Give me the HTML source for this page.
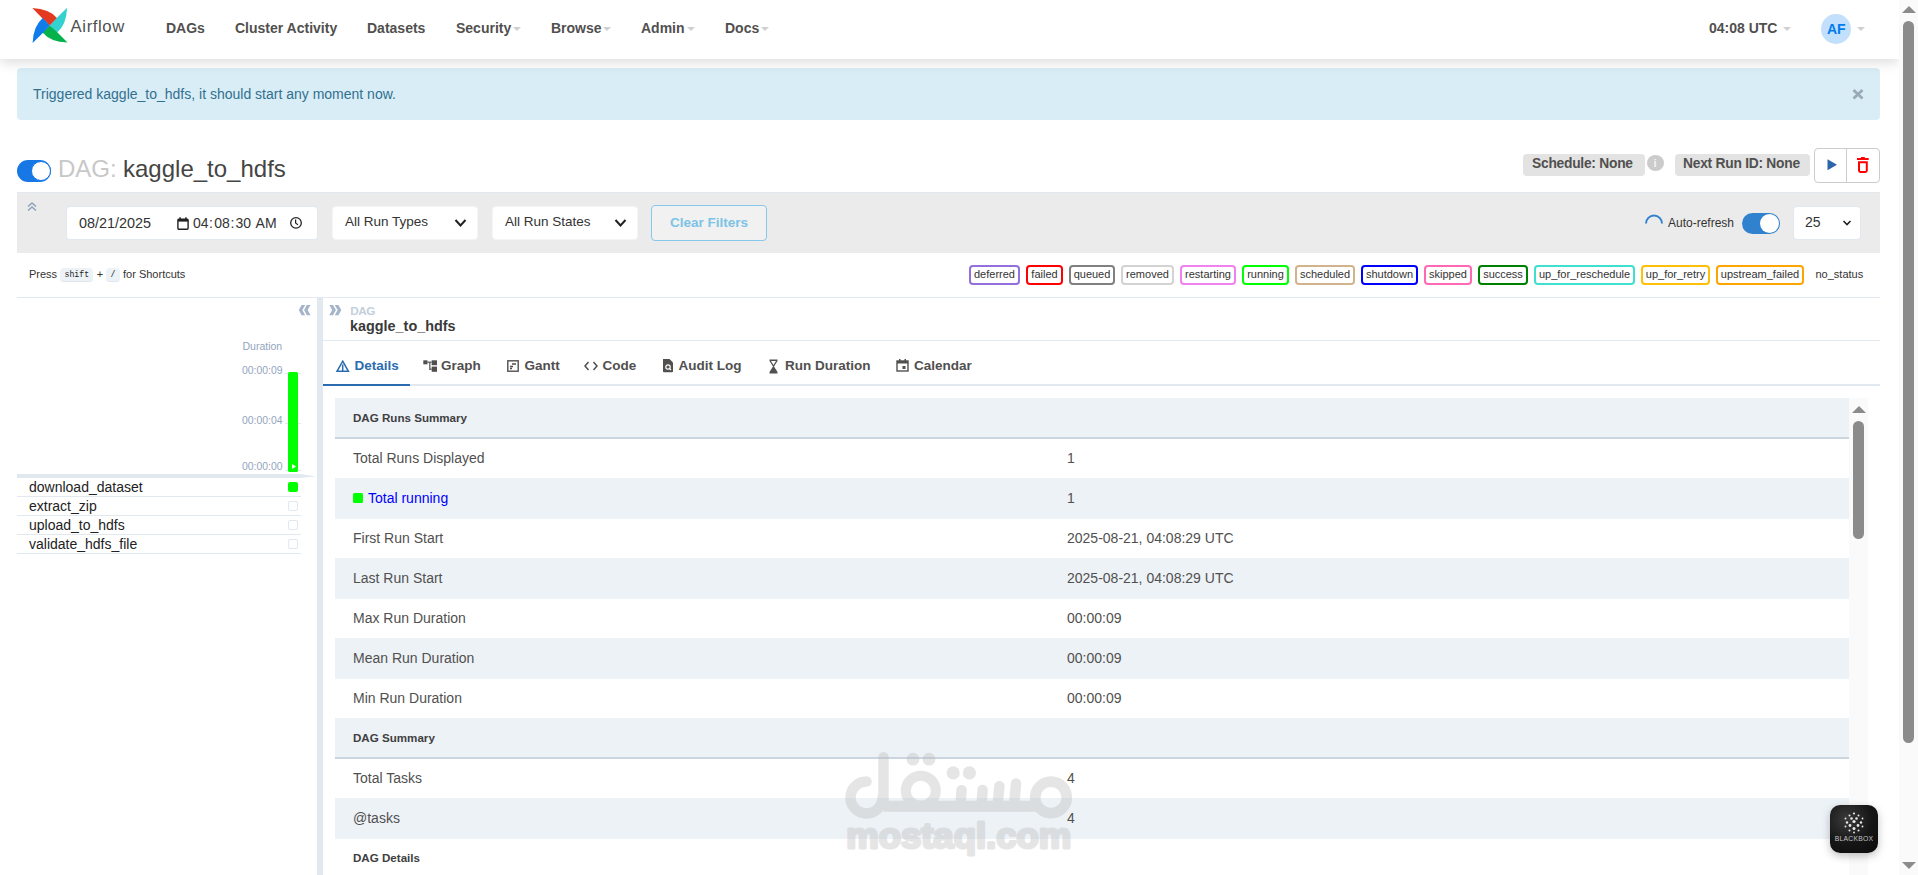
<!DOCTYPE html>
<html><head><meta charset="utf-8"><title>Airflow</title>
<style>
html,body{margin:0;padding:0;width:1918px;height:875px;overflow:hidden;background:#fff;}
body{position:relative;font-family:"Liberation Sans", sans-serif;}
.t{position:absolute;white-space:nowrap;}
.r{position:absolute;box-sizing:border-box;}
svg{position:absolute;overflow:visible;}
</style></head><body>
<div class="r" style="left:0px;top:0px;width:1899px;height:59px;background:#fff;box-shadow:0 3px 12px rgba(0,0,0,0.15);z-index:1"></div>
<svg style="left:30px;top:6px;z-index:2" width="40" height="40" viewBox="0 0 40 40">
<path d="M2.3 2.1 L12.3 12.3 L19.9 19.4 L27.2 12.3 Q19.4 2.8 2.3 2.1 Z" fill="#e43921"/>
<path d="M37.1 1.8 L26.9 11.8 L19.9 19.4 L26.9 26.7 Q36.5 18.9 37.1 1.8 Z" fill="#33d1d0"/>
<path d="M37.5 36.6 L27.5 26.4 L19.9 19.4 L12.6 26.4 Q20.4 35.9 37.5 36.6 Z" fill="#04b14b"/>
<path d="M2.6 37.0 L12.8 26.9 L19.9 19.4 L12.8 12.1 Q3.3 19.9 2.6 37.0 Z" fill="#0f7ce9"/>
</svg>
<div class="t " style="left:70.60px;top:18.66px;font-size:16.7px;line-height:16.7px;color:#51504f;font-weight:normal;z-index:2;letter-spacing:0.6px">Airflow</div>
<div class="t " style="left:166.00px;top:21.15px;font-size:14px;line-height:14px;color:#51504f;font-weight:bold;z-index:2">DAGs</div>
<div class="t " style="left:235.00px;top:21.15px;font-size:14px;line-height:14px;color:#51504f;font-weight:bold;z-index:2">Cluster Activity</div>
<div class="t " style="left:367.00px;top:21.15px;font-size:14px;line-height:14px;color:#51504f;font-weight:bold;z-index:2">Datasets</div>
<div class="t " style="left:456.00px;top:21.15px;font-size:14px;line-height:14px;color:#51504f;font-weight:bold;z-index:2">Security</div>
<div class="t " style="left:551.00px;top:21.15px;font-size:14px;line-height:14px;color:#51504f;font-weight:bold;z-index:2">Browse</div>
<div class="t " style="left:641.00px;top:21.15px;font-size:14px;line-height:14px;color:#51504f;font-weight:bold;z-index:2">Admin</div>
<div class="t " style="left:725.00px;top:21.15px;font-size:14px;line-height:14px;color:#51504f;font-weight:bold;z-index:2">Docs</div>
<div class="r" style="left:513px;top:26.5px;width:0;height:0;border-left:4.0px solid transparent;border-right:4.0px solid transparent;border-top:4px solid #cfcfcf;z-index:2"></div>
<div class="r" style="left:603px;top:26.5px;width:0;height:0;border-left:4.0px solid transparent;border-right:4.0px solid transparent;border-top:4px solid #cfcfcf;z-index:2"></div>
<div class="r" style="left:687px;top:26.5px;width:0;height:0;border-left:4.0px solid transparent;border-right:4.0px solid transparent;border-top:4px solid #cfcfcf;z-index:2"></div>
<div class="r" style="left:761px;top:26.5px;width:0;height:0;border-left:4.0px solid transparent;border-right:4.0px solid transparent;border-top:4px solid #cfcfcf;z-index:2"></div>
<div class="t " style="left:1709.00px;top:20.95px;font-size:14px;line-height:14px;color:#51504f;font-weight:bold;z-index:2">04:08 UTC</div>
<div class="r" style="left:1783px;top:27px;width:0;height:0;border-left:4.0px solid transparent;border-right:4.0px solid transparent;border-top:4px solid #cfcfcf;z-index:2"></div>
<div class="r" style="left:1821px;top:14px;width:30px;height:30px;background:#c2e0fb;border-radius:50%;z-index:2"></div>
<div class="t " style="left:1827.00px;top:22.05px;font-size:14px;line-height:14px;color:#017cee;font-weight:bold;z-index:2">AF</div>
<div class="r" style="left:1857px;top:27px;width:0;height:0;border-left:4.0px solid transparent;border-right:4.0px solid transparent;border-top:4px solid #cfcfcf;z-index:2"></div>
<div class="r" style="left:17px;top:68px;width:1863px;height:52px;background:#d9edf7;border-radius:4px"></div>
<div class="t " style="left:33.00px;top:87.05px;font-size:14px;line-height:14px;color:#31708f;font-weight:normal;">Triggered kaggle_to_hdfs, it should start any moment now.</div>
<svg style="left:1850px;top:86px" width="16" height="16" viewBox="0 0 16 16"><path d="M3.5 4 L12.5 12.5 M12.5 4 L3.5 12.5" stroke="#9aa9b8" stroke-width="2.8"/></svg>
<div class="r" style="left:17px;top:160px;width:34px;height:22px;background:#1677e5;border-radius:11px"></div>
<div class="r" style="left:30.5px;top:161px;width:20.0px;height:20px;background:#fff;border-radius:50%;border:1.5px solid #1677e5"></div>
<div class="t " style="left:58.00px;top:157.28px;font-size:24px;line-height:24px;color:#c8c8c8;font-weight:normal;">DAG:</div>
<div class="t " style="left:123.00px;top:157.28px;font-size:24px;line-height:24px;color:#454545;font-weight:normal;">kaggle_to_hdfs</div>
<div class="r" style="left:1523px;top:154px;width:122px;height:22px;background:#e3e3e3;border-radius:4px"></div>
<div class="t " style="left:1532.00px;top:157.22px;font-size:13.8px;line-height:13.8px;color:#51504f;font-weight:bold;letter-spacing:-0.25px">Schedule: None</div>
<div class="r" style="left:1647px;top:155px;width:17px;height:16px;background:#cbcbcb;border-radius:50%"></div>
<div class="t " style="left:1653.50px;top:158.19px;font-size:11px;line-height:11px;color:#f2f2f2;font-weight:bold;">i</div>
<div class="r" style="left:1675px;top:154px;width:135px;height:22px;background:#e3e3e3;border-radius:4px"></div>
<div class="t " style="left:1683.00px;top:157.22px;font-size:13.8px;line-height:13.8px;color:#51504f;font-weight:bold;letter-spacing:-0.25px">Next Run ID: None</div>
<div class="r" style="left:1814px;top:148px;width:66px;height:35px;border:1px solid #ccc;border-radius:4px;background:#fff"></div>
<div class="r" style="left:1846px;top:148px;width:1px;height:35px;background:#ccc"></div>
<svg style="left:1827px;top:159px" width="11" height="12" viewBox="0 0 11 12"><path d="M0.5 0.3 L10 5.8 L0.5 11.3 Z" fill="#2d65ad"/></svg>
<svg style="left:1856px;top:156px" width="14" height="18" viewBox="0 0 14 18"><rect x="1" y="2" width="11.7" height="2" fill="#f00"/><rect x="5" y="1" width="3.8" height="2" fill="#f00"/><path d="M3 6.2 H10.8 V14.6 Q10.8 15.9 9.5 15.9 H4.3 Q3 15.9 3 14.6 Z" fill="none" stroke="#f00" stroke-width="2"/></svg>
<div class="r" style="left:17px;top:192px;width:1863px;height:61px;background:#ebebeb;border-top:1px solid #e3e8ee"></div>
<svg style="left:27px;top:202px" width="10" height="10" viewBox="0 0 10 10"><path d="M1 4.5 L5 1 L9 4.5 M1 8.5 L5 5 L9 8.5" fill="none" stroke="#8ea3bf" stroke-width="1.6"/></svg>
<div class="r" style="left:66px;top:206px;width:252px;height:34px;background:#fff;border:1px solid #e2e8f0;border-radius:4px"></div>
<div class="t " style="left:79.00px;top:215.81px;font-size:14.4px;line-height:14.4px;color:#333;font-weight:normal;">08/21/2025</div>
<svg style="left:177px;top:217px" width="12" height="13" viewBox="0 0 12 13"><rect x="0.9" y="2.2" width="10.2" height="10" rx="1" fill="none" stroke="#222" stroke-width="1.4"/><rect x="0.9" y="2.2" width="10.2" height="2.4" fill="#222"/><rect x="2.3" y="0.3" width="1.5" height="2.5" fill="#222"/><rect x="8.2" y="0.3" width="1.5" height="2.5" fill="#222"/></svg>
<div class="t " style="left:193.00px;top:216.15px;font-size:14px;line-height:14px;color:#333;font-weight:normal;">04</div>
<div class="t " style="left:209.00px;top:216.15px;font-size:14px;line-height:14px;color:#333;font-weight:normal;">:</div>
<div class="t " style="left:214.30px;top:216.15px;font-size:14px;line-height:14px;color:#333;font-weight:normal;">08</div>
<div class="t " style="left:230.50px;top:216.15px;font-size:14px;line-height:14px;color:#333;font-weight:normal;">:</div>
<div class="t " style="left:235.40px;top:216.15px;font-size:14px;line-height:14px;color:#333;font-weight:normal;">30</div>
<div class="t " style="left:255.60px;top:216.15px;font-size:14px;line-height:14px;color:#333;font-weight:normal;">AM</div>
<svg style="left:289px;top:216px" width="14" height="14" viewBox="0 0 14 14"><circle cx="7" cy="6.9" r="5.3" fill="none" stroke="#222" stroke-width="1.3"/><path d="M6.6 3.6 V7 L9 8.9" fill="none" stroke="#222" stroke-width="1.2"/></svg>
<div class="r" style="left:332px;top:206px;width:146px;height:34px;background:#fff;border:1px solid #f3f5f8;border-radius:4px"></div>
<div class="t " style="left:345.00px;top:215.37px;font-size:13.5px;line-height:13.5px;color:#333;font-weight:normal;">All Run Types</div>
<svg style="left:453.5px;top:218px" width="13" height="10" viewBox="0 0 13 10"><path d="M1.5 2 L6.5 7.5 L11.5 2" fill="none" stroke="#222" stroke-width="2"/></svg>
<div class="r" style="left:492px;top:206px;width:146px;height:34px;background:#fff;border:1px solid #f3f5f8;border-radius:4px"></div>
<div class="t " style="left:505.00px;top:215.37px;font-size:13.5px;line-height:13.5px;color:#333;font-weight:normal;">All Run States</div>
<svg style="left:613.5px;top:218px" width="13" height="10" viewBox="0 0 13 10"><path d="M1.5 2 L6.5 7.5 L11.5 2" fill="none" stroke="#222" stroke-width="2"/></svg>
<div class="r" style="left:651px;top:205px;width:116px;height:36px;border:1px solid #85c8ea;border-radius:4px;background:#f1f1f1"></div>
<div class="t " style="left:670.00px;top:215.97px;font-size:13.5px;line-height:13.5px;color:#7cc3e6;font-weight:bold;">Clear Filters</div>
<svg style="left:1644px;top:213px" width="20" height="12" viewBox="0 0 20 12"><path d="M2 10.5 A8 8 0 0 1 18 10.5" fill="none" stroke="#3182ce" stroke-width="2"/></svg>
<div class="t " style="left:1668.00px;top:216.84px;font-size:12px;line-height:12px;color:#333;font-weight:normal;">Auto-refresh</div>
<div class="r" style="left:1742px;top:213px;width:38px;height:21px;background:#3182ce;border-radius:11px"></div>
<div class="r" style="left:1760px;top:214px;width:19px;height:19px;background:#fff;border-radius:50%"></div>
<div class="r" style="left:1793px;top:206px;width:68px;height:34px;background:#fff;border:1px solid #e2e8f0;border-radius:4px"></div>
<div class="t " style="left:1805.00px;top:215.15px;font-size:14px;line-height:14px;color:#333;font-weight:normal;">25</div>
<svg style="left:1842px;top:219px" width="10" height="8" viewBox="0 0 10 8"><path d="M1.5 2 L5 5.5 L8.5 2" fill="none" stroke="#222" stroke-width="1.6"/></svg>
<div class="t " style="left:29.00px;top:269.09px;font-size:11px;line-height:11px;color:#333;font-weight:normal;">Press</div>
<div class="r" style="left:60px;top:268px;width:33px;height:14px;background:#edf2f7;border-radius:4px;border-bottom:1px solid #dfe6ee"></div>
<div class="t " style="left:64.50px;top:270.56px;font-size:8.2px;line-height:8.2px;color:#222;font-weight:normal;font-family:'Liberation Mono',monospace">shift</div>
<div class="t " style="left:96.70px;top:269.09px;font-size:11px;line-height:11px;color:#333;font-weight:normal;">+</div>
<div class="r" style="left:106px;top:268px;width:14px;height:14px;background:#edf2f7;border-radius:4px;border-bottom:1px solid #dfe6ee"></div>
<div class="t " style="left:110.50px;top:270.56px;font-size:8.2px;line-height:8.2px;color:#222;font-weight:normal;font-family:'Liberation Mono',monospace">/</div>
<div class="t " style="left:123.00px;top:269.09px;font-size:11px;line-height:11px;color:#333;font-weight:normal;">for Shortcuts</div>
<div class="r" style="left:969px;top:265px;width:51px;height:20px;border:2px solid #9370db;border-radius:4px;font-size:11px;line-height:15px;text-align:center;color:#333;white-space:nowrap">deferred</div>
<div class="r" style="left:1026px;top:265px;width:37px;height:20px;border:2px solid #ff0000;border-radius:4px;font-size:11px;line-height:15px;text-align:center;color:#333;white-space:nowrap">failed</div>
<div class="r" style="left:1069px;top:265px;width:46px;height:20px;border:2px solid #808080;border-radius:4px;font-size:11px;line-height:15px;text-align:center;color:#333;white-space:nowrap">queued</div>
<div class="r" style="left:1121px;top:265px;width:53px;height:20px;border:2px solid #d3d3d3;border-radius:4px;font-size:11px;line-height:15px;text-align:center;color:#333;white-space:nowrap">removed</div>
<div class="r" style="left:1180px;top:265px;width:56px;height:20px;border:2px solid #ee82ee;border-radius:4px;font-size:11px;line-height:15px;text-align:center;color:#333;white-space:nowrap">restarting</div>
<div class="r" style="left:1242px;top:265px;width:47px;height:20px;border:2px solid #00ff00;border-radius:4px;font-size:11px;line-height:15px;text-align:center;color:#333;white-space:nowrap">running</div>
<div class="r" style="left:1295px;top:265px;width:60px;height:20px;border:2px solid #d2b48c;border-radius:4px;font-size:11px;line-height:15px;text-align:center;color:#333;white-space:nowrap">scheduled</div>
<div class="r" style="left:1361px;top:265px;width:57px;height:20px;border:2px solid #0000ff;border-radius:4px;font-size:11px;line-height:15px;text-align:center;color:#333;white-space:nowrap">shutdown</div>
<div class="r" style="left:1424px;top:265px;width:48px;height:20px;border:2px solid #ff69b4;border-radius:4px;font-size:11px;line-height:15px;text-align:center;color:#333;white-space:nowrap">skipped</div>
<div class="r" style="left:1478px;top:265px;width:50px;height:20px;border:2px solid #008000;border-radius:4px;font-size:11px;line-height:15px;text-align:center;color:#333;white-space:nowrap">success</div>
<div class="r" style="left:1534px;top:265px;width:101px;height:20px;border:2px solid #40e0d0;border-radius:4px;font-size:11px;line-height:15px;text-align:center;color:#333;white-space:nowrap">up_for_reschedule</div>
<div class="r" style="left:1641px;top:265px;width:69px;height:20px;border:2px solid #ffc107;border-radius:4px;font-size:11px;line-height:15px;text-align:center;color:#333;white-space:nowrap">up_for_retry</div>
<div class="r" style="left:1716px;top:265px;width:88px;height:20px;border:2px solid #ffa500;border-radius:4px;font-size:11px;line-height:15px;text-align:center;color:#333;white-space:nowrap">upstream_failed</div>
<div class="t " style="left:1815.50px;top:268.99px;font-size:11px;line-height:11px;color:#333;font-weight:normal;">no_status</div>
<div class="r" style="left:17px;top:297px;width:1863px;height:1px;background:#e2e8f0"></div>
<svg style="left:298px;top:304px" width="14" height="12" viewBox="0 0 14 12"><path d="M3.6 0.9 L7.2 0.9 L4.3 6 L7.2 11.2 L3.6 11.2 L0.8 6 Z M8.9 0.9 L12.5 0.9 L9.6 6 L12.5 11.2 L8.9 11.2 L6.1 6 Z" fill="#a3b4cb"/></svg>
<div class="t " style="left:242.50px;top:341.11px;font-size:10.5px;line-height:10.5px;color:#93a5bd;font-weight:normal;">Duration</div>
<div class="t " style="left:242.00px;top:365.90px;font-size:10.4px;line-height:10.4px;color:#93a5bd;font-weight:normal;">00:00:09</div>
<div class="r" style="left:285px;top:373px;width:16px;height:1px;border-top:1px dashed #e2e8f0"></div>
<div class="t " style="left:242.00px;top:416.00px;font-size:10.4px;line-height:10.4px;color:#93a5bd;font-weight:normal;">00:00:04</div>
<div class="r" style="left:285px;top:423px;width:16px;height:1px;border-top:1px dashed #e2e8f0"></div>
<div class="t " style="left:242.00px;top:462.20px;font-size:10.4px;line-height:10.4px;color:#93a5bd;font-weight:normal;">00:00:00</div>
<div class="r" style="left:285px;top:470px;width:16px;height:1px;border-top:1px dashed #e2e8f0"></div>
<div class="r" style="left:288px;top:372px;width:10px;height:99.5px;background:#00ff00;border-radius:1.5px"></div>
<svg style="left:291px;top:463px" width="6" height="7" viewBox="0 0 6 7"><path d="M1 1 L5 3.5 L1 6 Z" fill="#fff"/></svg>
<div class="r" style="left:17px;top:474px;width:284px;height:4px;background:#e2e8f0"></div>
<svg style="left:300px;top:474px" width="16" height="4" viewBox="0 0 16 4"><path d="M0 0 L16 2.5 L0 4 Z" fill="#e2e8f0"/></svg>
<div class="t " style="left:29.00px;top:479.95px;font-size:14px;line-height:14px;color:#222;font-weight:normal;">download_dataset</div>
<div class="r" style="left:17px;top:496px;width:284px;height:1px;background:#e2e8f0"></div>
<div class="r" style="left:288px;top:482px;width:10px;height:10px;background:#00ff00;border-radius:2px"></div>
<div class="t " style="left:29.00px;top:499.05px;font-size:14px;line-height:14px;color:#222;font-weight:normal;">extract_zip</div>
<div class="r" style="left:17px;top:515px;width:284px;height:1px;background:#e2e8f0"></div>
<div class="r" style="left:288px;top:501px;width:10px;height:10px;border:1px solid #e2e8f0;border-radius:2px"></div>
<div class="t " style="left:29.00px;top:518.15px;font-size:14px;line-height:14px;color:#222;font-weight:normal;">upload_to_hdfs</div>
<div class="r" style="left:17px;top:534px;width:284px;height:1px;background:#e2e8f0"></div>
<div class="r" style="left:288px;top:520px;width:10px;height:10px;border:1px solid #e2e8f0;border-radius:2px"></div>
<div class="t " style="left:29.00px;top:537.25px;font-size:14px;line-height:14px;color:#222;font-weight:normal;">validate_hdfs_file</div>
<div class="r" style="left:17px;top:553px;width:284px;height:1px;background:#e2e8f0"></div>
<div class="r" style="left:288px;top:539px;width:10px;height:10px;border:1px solid #e2e8f0;border-radius:2px"></div>
<div class="r" style="left:317px;top:298px;width:6px;height:577px;background:#e2e8f0"></div>
<svg style="left:329px;top:304px" width="14" height="12" viewBox="0 0 14 12"><path d="M0.3 0.9 L3.9 0.9 L6.9 6 L3.9 11.2 L0.3 11.2 L3.2 6 Z M5.8 0.9 L9.4 0.9 L12.3 6 L9.4 11.2 L5.8 11.2 L8.7 6 Z" fill="#a3b4cb"/></svg>
<div class="t " style="left:350.30px;top:306.01px;font-size:11.8px;line-height:11.8px;color:#c3cfdc;font-weight:bold;letter-spacing:-0.6px">DAG</div>
<div class="t " style="left:350.00px;top:318.51px;font-size:14.4px;line-height:14.4px;color:#3a3a3a;font-weight:bold;">kaggle_to_hdfs</div>
<div class="r" style="left:323px;top:340px;width:1557px;height:1px;background:#e2e8f0"></div>
<div class="r" style="left:323px;top:384px;width:1557px;height:2px;background:#e2e8f0"></div>
<div class="r" style="left:323px;top:384px;width:87px;height:2px;background:#2b6cb0"></div>
<div class="t " style="left:354.40px;top:358.87px;font-size:13.5px;line-height:13.5px;color:#2b6cb0;font-weight:bold;">Details</div>
<div class="t " style="left:441.00px;top:358.87px;font-size:13.5px;line-height:13.5px;color:#51504f;font-weight:bold;">Graph</div>
<div class="t " style="left:524.50px;top:358.87px;font-size:13.5px;line-height:13.5px;color:#51504f;font-weight:bold;">Gantt</div>
<div class="t " style="left:602.50px;top:358.87px;font-size:13.5px;line-height:13.5px;color:#51504f;font-weight:bold;">Code</div>
<div class="t " style="left:678.50px;top:358.87px;font-size:13.5px;line-height:13.5px;color:#51504f;font-weight:bold;">Audit Log</div>
<div class="t " style="left:785.00px;top:358.87px;font-size:13.5px;line-height:13.5px;color:#51504f;font-weight:bold;">Run Duration</div>
<div class="t " style="left:914.00px;top:358.87px;font-size:13.5px;line-height:13.5px;color:#51504f;font-weight:bold;">Calendar</div>
<svg style="left:336px;top:360px" width="14" height="13" viewBox="0 0 14 13"><path d="M6.7 1.2 L12.4 11.3 H1 Z M6.7 4.5 V10.8" fill="none" stroke="#2b6cb0" stroke-width="1.5" stroke-linejoin="miter"/></svg>
<svg style="left:423px;top:360px" width="15" height="13" viewBox="0 0 15 13"><rect x="0.3" y="0.3" width="4.2" height="4" fill="#51504f"/><rect x="8.7" y="0.3" width="5.3" height="4.9" fill="#51504f"/><rect x="8.7" y="6.6" width="5.3" height="5.2" fill="#51504f"/><path d="M4.5 2.3 H8.7 M6.8 2.3 V9.2 H8.7" fill="none" stroke="#6a6a6a" stroke-width="1.4"/></svg>
<svg style="left:507px;top:360px" width="12" height="12" viewBox="0 0 12 12"><rect x="0.8" y="0.8" width="10.4" height="10.4" fill="none" stroke="#51504f" stroke-width="1.4"/><path d="M5 4 H9 M3 6.5 H6 M3 8.5 H5" fill="none" stroke="#51504f" stroke-width="1.3"/></svg>
<svg style="left:584px;top:361px" width="14" height="10" viewBox="0 0 14 10"><path d="M4.5 1 L1 5 L4.5 9 M9.5 1 L13 5 L9.5 9" fill="none" stroke="#51504f" stroke-width="1.5"/></svg>
<svg style="left:662px;top:358px" width="12" height="15" viewBox="0 0 12 15"><path d="M1 1 H7.5 L11 4.5 V13.5 Q11 14.3 10 14.3 H2 Q1 14.3 1 13.5 Z" fill="#51504f"/><circle cx="6" cy="9" r="2.2" fill="none" stroke="#fff" stroke-width="1.2"/><path d="M7.5 10.5 L9 12" stroke="#fff" stroke-width="1.2"/></svg>
<svg style="left:769px;top:358.7px" width="9" height="15" viewBox="0 0 9 15"><path d="M0.5 0.5 H8.5 V2 L5 7.5 L8.5 13 V14.5 H0.5 V13 L4 7.5 L0.5 2 Z" fill="#51504f"/><path d="M2 2 H7 L4.5 6 Z" fill="#fff"/></svg>
<svg style="left:896px;top:358px" width="13" height="14" viewBox="0 0 13 14"><rect x="1" y="3" width="11" height="10" fill="none" stroke="#51504f" stroke-width="1.4"/><rect x="1" y="3" width="11" height="2.5" fill="#51504f"/><rect x="3" y="1" width="1.5" height="3" fill="#51504f"/><rect x="8.5" y="1" width="1.5" height="3" fill="#51504f"/><rect x="6.5" y="8" width="3" height="3" fill="#51504f"/></svg>
<div class="r" style="left:335px;top:398px;width:1514px;height:39px;background:#edf2f7"></div>
<div class="r" style="left:335px;top:437px;width:1514px;height:2px;background:#cbd5e0"></div>
<div class="t " style="left:353.00px;top:412.08px;font-size:11.6px;line-height:11.6px;color:#404040;font-weight:bold;">DAG Runs Summary</div>
<div class="t " style="left:353.00px;top:451.15px;font-size:14px;line-height:14px;color:#51504f;font-weight:normal;">Total Runs Displayed</div>
<div class="t " style="left:1067.00px;top:451.15px;font-size:14px;line-height:14px;color:#51504f;font-weight:normal;">1</div>
<div class="r" style="left:335px;top:478px;width:1514px;height:41px;background:#edf2f7"></div>
<div class="t " style="left:353.00px;top:491.15px;font-size:14px;line-height:14px;color:#51504f;font-weight:normal;"><span style="display:inline-block;width:10px;height:10px;background:#00ff00;border-radius:1.5px;margin-right:5px;vertical-align:0px"></span><span style="color:#0000ff">Total running</span></div>
<div class="t " style="left:1067.00px;top:491.15px;font-size:14px;line-height:14px;color:#51504f;font-weight:normal;">1</div>
<div class="t " style="left:353.00px;top:531.15px;font-size:14px;line-height:14px;color:#51504f;font-weight:normal;">First Run Start</div>
<div class="t " style="left:1067.00px;top:531.15px;font-size:14px;line-height:14px;color:#51504f;font-weight:normal;">2025-08-21, 04:08:29 UTC</div>
<div class="r" style="left:335px;top:558px;width:1514px;height:41px;background:#edf2f7"></div>
<div class="t " style="left:353.00px;top:571.15px;font-size:14px;line-height:14px;color:#51504f;font-weight:normal;">Last Run Start</div>
<div class="t " style="left:1067.00px;top:571.15px;font-size:14px;line-height:14px;color:#51504f;font-weight:normal;">2025-08-21, 04:08:29 UTC</div>
<div class="t " style="left:353.00px;top:611.15px;font-size:14px;line-height:14px;color:#51504f;font-weight:normal;">Max Run Duration</div>
<div class="t " style="left:1067.00px;top:611.15px;font-size:14px;line-height:14px;color:#51504f;font-weight:normal;">00:00:09</div>
<div class="r" style="left:335px;top:638px;width:1514px;height:41px;background:#edf2f7"></div>
<div class="t " style="left:353.00px;top:651.15px;font-size:14px;line-height:14px;color:#51504f;font-weight:normal;">Mean Run Duration</div>
<div class="t " style="left:1067.00px;top:651.15px;font-size:14px;line-height:14px;color:#51504f;font-weight:normal;">00:00:09</div>
<div class="t " style="left:353.00px;top:691.15px;font-size:14px;line-height:14px;color:#51504f;font-weight:normal;">Min Run Duration</div>
<div class="t " style="left:1067.00px;top:691.15px;font-size:14px;line-height:14px;color:#51504f;font-weight:normal;">00:00:09</div>
<div class="r" style="left:335px;top:718px;width:1514px;height:39px;background:#edf2f7"></div>
<div class="r" style="left:335px;top:757px;width:1514px;height:2px;background:#cbd5e0"></div>
<div class="t " style="left:353.00px;top:732.08px;font-size:11.6px;line-height:11.6px;color:#404040;font-weight:bold;">DAG Summary</div>
<div class="t " style="left:353.00px;top:771.15px;font-size:14px;line-height:14px;color:#51504f;font-weight:normal;">Total Tasks</div>
<div class="t " style="left:1067.00px;top:771.15px;font-size:14px;line-height:14px;color:#51504f;font-weight:normal;">4</div>
<div class="r" style="left:335px;top:798px;width:1514px;height:41px;background:#edf2f7"></div>
<div class="t " style="left:353.00px;top:811.15px;font-size:14px;line-height:14px;color:#51504f;font-weight:normal;">@tasks</div>
<div class="t " style="left:1067.00px;top:811.15px;font-size:14px;line-height:14px;color:#51504f;font-weight:normal;">4</div>
<div class="t " style="left:353.00px;top:852.08px;font-size:11.6px;line-height:11.6px;color:#404040;font-weight:bold;">DAG Details</div>
<div class="r" style="left:335px;top:437px;width:1514px;height:2px;background:#cbd5e0"></div>
<div class="r" style="left:335px;top:757px;width:1514px;height:2px;background:#cbd5e0"></div>
<div class="r" style="left:1849px;top:398px;width:19px;height:477px;background:#fafafa"></div>
<svg style="left:1852px;top:406px" width="14" height="7" viewBox="0 0 14 7"><path d="M0 7 L7 0 L14 7 Z" fill="#8b8b8b"/></svg>
<div class="r" style="left:1853px;top:421px;width:11px;height:118px;background:#8b8b8b;border-radius:6px"></div>
<div class="r" style="left:1899px;top:0px;width:19px;height:875px;background:#fafafa;z-index:5"></div>
<svg style="left:1902px;top:6px;z-index:6" width="14" height="7" viewBox="0 0 14 7"><path d="M0 7 L7 0 L14 7 Z" fill="#8b8b8b"/></svg>
<svg style="left:1902px;top:862px;z-index:6" width="14" height="7" viewBox="0 0 14 7"><path d="M0 0 L14 0 L7 7 Z" fill="#8b8b8b"/></svg>
<div class="r" style="left:1903px;top:21px;width:11px;height:722px;background:#8b8b8b;border-radius:6px;z-index:6"></div>
<div class="r" style="left:1830px;top:805px;width:48px;height:48px;border-radius:10px;background:radial-gradient(circle at 35% 30%,#3a3a3a 0%,#151515 55%,#0b0b0b 100%);box-shadow:0 3px 8px rgba(0,0,0,0.25)">
<svg style="left:0;top:0" width="48" height="48" viewBox="0 0 48 48">
<g fill="#e8e8e8">
<circle cx="24" cy="8.5" r="1.1"/><circle cx="19.5" cy="10.5" r="1"/><circle cx="28.5" cy="10.5" r="1"/>
<circle cx="15.5" cy="13.5" r="0.9"/><circle cx="21.5" cy="13.5" r="1.3"/><circle cx="26.5" cy="13.5" r="1.3"/><circle cx="32.5" cy="13.5" r="0.9"/>
<circle cx="17" cy="17.5" r="1.2"/><circle cx="24" cy="16.5" r="1.6"/><circle cx="31" cy="17.5" r="1.2"/>
<circle cx="20" cy="20.5" r="1.4"/><circle cx="28" cy="20.5" r="1.4"/><circle cx="15.5" cy="21.5" r="0.9"/><circle cx="32.5" cy="21.5" r="0.9"/>
<circle cx="24" cy="23.5" r="1.5"/><circle cx="19.5" cy="25.5" r="1"/><circle cx="28.5" cy="25.5" r="1"/><circle cx="24" cy="27.5" r="0.9"/>
</g>
<text x="24" y="35.8" text-anchor="middle" font-family="Liberation Sans" font-size="6.8" fill="#c4c4c4" letter-spacing="0.25">BLACKBOX</text>
</svg></div>
<svg style="left:830px;top:740px" width="260" height="130" viewBox="0 0 260 130">
<g opacity="0.34">
<g fill="none" stroke="#b6b6b6" stroke-linecap="round">
<path d="M53.5 17.2 V62" stroke-width="10.5"/>
<path d="M36.5 41.5 A16 16 0 1 0 52.5 57.5" stroke-width="10.5"/>
<path d="M53.5 66.3 H210" stroke-width="11" stroke-linecap="butt"/>
<circle cx="90.8" cy="50.7" r="15" stroke-width="10"/>
<path d="M131.6 50.2 L130.6 63 M152.6 50 L151.7 63 M169.4 46.2 L167.8 63 M186 43.6 L184.3 63" stroke-width="10.5"/>
<circle cx="221" cy="57.4" r="15.8" stroke-width="10.6"/>
</g>
<g fill="#b6b6b6">
<circle cx="83" cy="19.2" r="6.4"/><circle cx="99" cy="19.2" r="6.4"/>
<circle cx="123.2" cy="32.9" r="6.6"/><circle cx="139.4" cy="32.9" r="6.6"/>
</g>
<text transform="translate(16.2,108.3) scale(1,1.08)" x="0" y="0" font-family="Liberation Sans" font-weight="bold" font-size="32" fill="#b6b6b6" stroke="#b6b6b6" stroke-width="2.6" stroke-linejoin="round" textLength="225" lengthAdjust="spacingAndGlyphs">mostaql.com</text>
</g>
</svg>
</body></html>
